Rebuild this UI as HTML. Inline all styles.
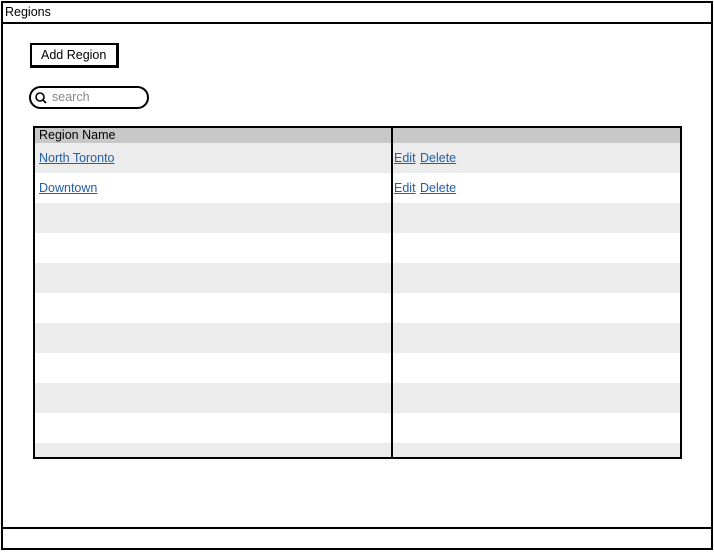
<!DOCTYPE html>
<html><head><style>
body{margin:0;width:714px;height:552px;background:#fff;font-family:"Liberation Sans",sans-serif;position:relative;overflow:hidden}
.a{position:absolute;box-sizing:border-box}
a{color:#1f5ea8;text-decoration:underline;font-size:12.5px}
</style></head><body>
<div class="a" style="left:1px;top:1px;width:712px;height:549px;border:2px solid #000"></div>
<div class="a" style="left:1px;top:22px;width:712px;height:2px;background:#000"></div>
<div class="a" style="left:5px;top:5px;font-size:12.5px">Regions</div>
<div class="a" style="left:1px;top:527px;width:712px;height:2px;background:#000"></div>
<div class="a" style="left:30px;top:43px;width:89px;height:25px;border:2px solid #000;border-right-width:3px;border-bottom-width:3px;font-size:12.5px;padding:3px 0 0 9px">Add Region</div>
<div class="a" style="left:29px;top:86px;width:120px;height:23px;border:2px solid #000;border-radius:12px;font-size:12.5px;color:#888;padding:2px 0 0 21px">search</div>
<svg class="a" style="left:34px;top:91px" width="14" height="14"><circle cx="6" cy="6" r="4" fill="none" stroke="#000" stroke-width="1.6"/><line x1="9" y1="9" x2="12" y2="12" stroke="#000" stroke-width="1.8"/></svg>
<div class="a" style="left:33px;top:126px;width:649px;height:333px;border:2px solid #000;overflow:hidden">
<div class="a" style="left:0;top:0;width:100%;height:15px;background:#c8c8c8"></div>
<div class="a" style="left:4px;top:0;font-size:12.5px">Region Name</div>
<div class="a" style="left:0;top:15px;width:100%;height:30px;background:#ececec"></div>
<div class="a" style="left:0;top:75px;width:100%;height:30px;background:#ececec"></div>
<div class="a" style="left:0;top:135px;width:100%;height:30px;background:#ececec"></div>
<div class="a" style="left:0;top:195px;width:100%;height:30px;background:#ececec"></div>
<div class="a" style="left:0;top:255px;width:100%;height:30px;background:#ececec"></div>
<div class="a" style="left:0;top:315px;width:100%;height:30px;background:#ececec"></div>
<div class="a" style="left:4px;top:21px"><a>North Toronto</a></div>
<div class="a" style="left:4px;top:51px"><a>Downtown</a></div>
<div class="a" style="left:359px;top:21px"><a>Edit</a> <a>Delete</a></div>
<div class="a" style="left:359px;top:51px"><a>Edit</a> <a>Delete</a></div>
<div class="a" style="left:356px;top:0;width:2px;height:100%;background:#000"></div>
</div>
</body></html>
